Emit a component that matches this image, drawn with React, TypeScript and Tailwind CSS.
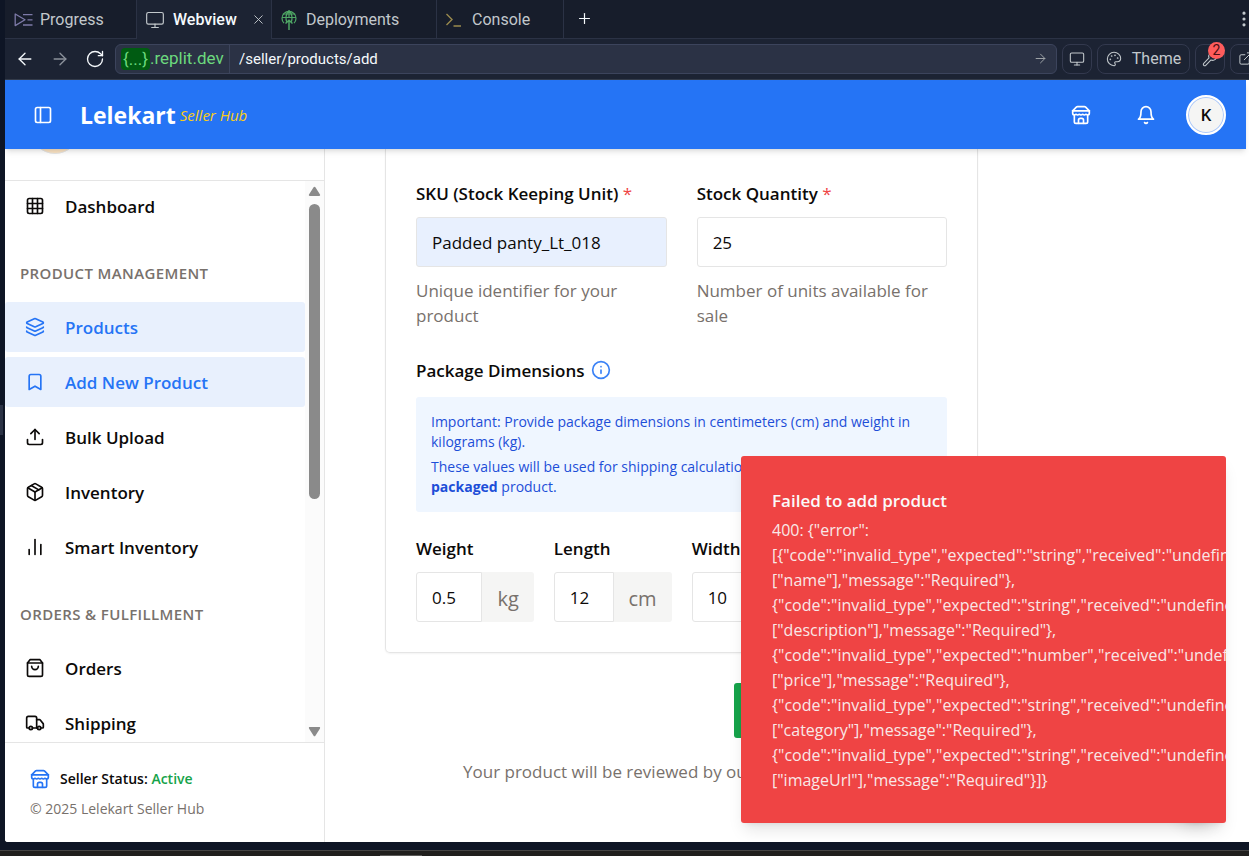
import type { ReactNode } from 'react';
import {
  ArrowLeft,
  ArrowRight,
  Bookmark,
  ChartNoAxesColumn,
  ExternalLink,
  Grid3x3,
  Info,
  Layers,
  Monitor,
  MoreVertical,
  Package,
  Palette,
  PanelLeft,
  Plus,
  RotateCw,
  Truck,
  Upload,
  Wrench,
  X,
} from 'lucide-react';

function Svg({ size = 20, className = '', children }: { size?: number; className?: string; children: ReactNode }) {
  return (
    <svg
      width={size}
      height={size}
      viewBox="0 0 24 24"
      fill="none"
      stroke="currentColor"
      strokeWidth={2}
      strokeLinecap="round"
      strokeLinejoin="round"
      className={className}
      aria-hidden="true"
    >
      {children}
    </svg>
  );
}

function StoreIcon({ className = '' }: { className?: string }) {
  return (
    <Svg className={className}>
      <path d="m2 7 4.41-4.41A2 2 0 0 1 7.83 2h8.34a2 2 0 0 1 1.42.59L22 7" />
      <path d="M4 12v8a2 2 0 0 0 2 2h12a2 2 0 0 0 2-2v-8" />
      <path d="M15 22v-4a2 2 0 0 0-2-2h-2a2 2 0 0 0-2 2v4" />
      <path d="M2 7h20" />
      <path d="M22 7v3a2 2 0 0 1-2 2a2.7 2.7 0 0 1-1.59-.63.7.7 0 0 0-.82 0A2.7 2.7 0 0 1 16 12a2.7 2.7 0 0 1-1.59-.63.7.7 0 0 0-.82 0A2.7 2.7 0 0 1 12 12a2.7 2.7 0 0 1-1.59-.63.7.7 0 0 0-.82 0A2.7 2.7 0 0 1 8 12a2.7 2.7 0 0 1-1.59-.63.7.7 0 0 0-.82 0A2.7 2.7 0 0 1 4 12a2 2 0 0 1-2-2V7" />
    </Svg>
  );
}

function BellIcon() {
  return (
    <Svg>
      <path d="M6 8a6 6 0 0 1 12 0c0 7 3 9 3 9H3s3-2 3-9" />
      <path d="M10.3 21a1.94 1.94 0 0 0 3.4 0" />
    </Svg>
  );
}

function BagIcon() {
  return (
    <Svg>
      <path d="M6 2 3 6v14a2 2 0 0 0 2 2h14a2 2 0 0 0 2-2V6l-3-4Z" />
      <path d="M3 6h18" />
      <path d="M16 10a4 4 0 0 1-8 0" />
    </Svg>
  );
}

function ProgressIcon() {
  return (
    <svg width="20" height="16" viewBox="0 0 20 16" fill="none" stroke="#7d7aa8" strokeWidth="1.3" aria-hidden="true">
      <path d="M1.2 2v11.6L11 7.8 1.2 2Z" strokeLinejoin="round" />
      <path d="M9 2.6h9.5M13.5 7.8h5M9 13h9.5" />
    </svg>
  );
}

function DeployIcon() {
  return (
    <svg width="18" height="22" viewBox="0 0 18 22" fill="none" stroke="#4fa765" strokeWidth="1.2" aria-hidden="true">
      <path d="M4 14.2A7 7 0 1 1 14 14.2" />
      <path d="M2 8.5h14M2.8 5h12.4M9 1.5C5.5 4.5 5.5 10.5 6.8 13M9 1.5c3.5 3 3.5 9 2.2 11.5M9 1.5v7" />
      <path d="M9 21v-9.5M5.5 14.5 9 11.2l3.5 3.3" strokeWidth="1.5" />
    </svg>
  );
}

function PromptIcon() {
  return (
    <svg width="17" height="16" viewBox="0 0 17 16" fill="none" stroke="#9a8a4e" strokeWidth="1.4" aria-hidden="true">
      <path d="m1.5 2 5.5 5.5L1.5 13M8.5 14H16" />
    </svg>
  );
}

function TabBar() {
  const tab = 'flex items-center border-r border-b border-[#2b3245] pt-0.5 text-base text-[#c2c8cc]';
  return (
    <nav className="flex h-[39px] bg-[#171d2b]" aria-label="Tool tabs">
      <button className={`${tab} w-[132px] gap-1.5 pl-[9px]`}>
        <ProgressIcon />
        Progress
      </button>
      <button className="flex w-[135px] items-center gap-2 border-r border-[#2b3245] bg-[#1c2333] pt-px pl-2 text-base font-medium text-[#f5f9fc]">
        <Monitor size={20} strokeWidth={1.4} className="text-[#c2c8cc]" />
        Webview
        <X size={15} strokeWidth={1.5} className="ml-1.5 text-[#c2c8cc]" />
      </button>
      <button className={`${tab} w-[165px] gap-2 pl-2`}>
        <DeployIcon />
        Deployments
      </button>
      <button className={`${tab} w-[127px] gap-2.5 pl-2`}>
        <PromptIcon />
        Console
      </button>
      <div className="flex grow items-center justify-between border-b border-[#2b3245] pl-3">
        <button aria-label="New tab">
          <Plus size={17} strokeWidth={1.7} className="text-[#f5f9fc]" />
        </button>
        <button aria-label="More options" className="-mr-[5px]">
          <MoreVertical size={20} strokeWidth={1.8} className="text-[#c2c8cc]" />
        </button>
      </div>
    </nav>
  );
}

function AddressBar() {
  const tool = 'flex h-[30px] shrink-0 items-center justify-center rounded-lg border border-[#33394e] text-[#c2c8cc]';
  return (
    <div className="flex h-[41px] shrink-0 items-center overflow-hidden border-b border-[#333b4a] bg-[#1c2333] pl-2.5">
      <div className="flex w-[100px] shrink-0 items-center gap-[15px] text-[#f5f9fc]">
        <button aria-label="Back">
          <ArrowLeft size={20} strokeWidth={1.6} />
        </button>
        <button aria-label="Forward" className="text-[#8b919b]">
          <ArrowRight size={20} strokeWidth={1.6} />
        </button>
        <button aria-label="Reload">
          <RotateCw size={20} strokeWidth={1.6} />
        </button>
      </div>
      <div className="flex h-[30px] grow items-center rounded-md border border-[#3c445c] bg-[#2b3245]">
        <div className="flex h-full w-[114px] items-center border-r border-[#3c445c] pl-[5px] text-[17px] text-[#6cd97e]">
          <span className="rounded bg-[#005b12] px-0.5 leading-[22px]">{'{...}'}</span>
          <span>.replit.dev</span>
        </div>
        <input
          aria-label="Path"
          defaultValue="/seller/products/add"
          className="h-full min-w-0 grow bg-transparent px-[9px] text-[15px] text-[#f5f9fc] outline-none"
        />
        <button aria-label="Go" className="mr-2 text-[#9da2a6]">
          <ArrowRight size={15} strokeWidth={1.6} />
        </button>
      </div>
      <div className="-mr-[11px] ml-[5px] flex shrink-0 gap-[5px]">
        <button className={`${tool} w-[30px]`} aria-label="Device size">
          <Monitor size={16} strokeWidth={1.6} />
        </button>
        <button className={`${tool} w-[93px] gap-2.5 text-base`}>
          <Palette size={16} strokeWidth={1.6} />
          Theme
        </button>
        <button className={`${tool} relative w-[30px]`} aria-label="Developer tools">
          <Wrench size={16} strokeWidth={1.6} />
          <span className="absolute -top-[3px] -right-px flex size-[17px] items-center justify-center rounded-full bg-[#ff5c5c] text-sm text-[#4a0f14]">
            2
          </span>
        </button>
        <button className={`${tool} w-[30px]`} aria-label="Open in new window">
          <ExternalLink size={15} strokeWidth={1.6} />
        </button>
      </div>
    </div>
  );
}

function SiteHeader() {
  return (
    <header className="z-10 flex h-[69px] shrink-0 items-center bg-[#2574f5] px-5 pt-0.5 text-white shadow-md">
      <button className="ml-2" aria-label="Toggle sidebar">
        <PanelLeft size={20} />
      </button>
      <a href="#home" className="ml-[27px] flex items-center gap-1">
        <span className="text-[23px] font-bold">Lelekart</span>
        <span className="text-[15px] text-[#facc15] italic">Seller Hub</span>
      </a>
      <div className="ml-auto flex items-center">
        <button aria-label="Store">
          <StoreIcon />
        </button>
        <button className="mx-[45px]" aria-label="Notifications">
          <BellIcon />
        </button>
        <button className="-ml-[15px] flex size-10 items-center justify-center rounded-full border-2 border-white bg-[#f5f5f4] text-[17px] font-semibold text-[#0c0a09] inset-ring inset-ring-[#a9c7fb]">
          K
        </button>
      </div>
    </header>
  );
}

function NavItem({ icon, label, active = false }: { icon: ReactNode; label: string; active?: boolean }) {
  return (
    <a
      href="#nav"
      className={`flex h-[50px] shrink-0 items-center gap-5 rounded-[3px] px-5 text-[17px] font-semibold ${
        active ? 'bg-[#e8f0fd] text-[#2574f5]' : 'text-[#0c0a09]'
      }`}
    >
      {icon}
      <span className="pt-[3px]">{label}</span>
    </a>
  );
}

function NavHeading({ children }: { children: ReactNode }) {
  return (
    <h2 className="-my-[5px] flex h-[71px] shrink-0 items-center px-[15px] pt-3.5 text-[15px] font-semibold tracking-wide text-[#78716c] uppercase">
      {children}
    </h2>
  );
}

function Sidebar() {
  return (
    <aside className="flex w-80 shrink-0 flex-col border-r border-[#e5e5e5] bg-white">
      <div className="h-8 shrink-0 overflow-hidden border-b border-[#e5e5e5] pl-[25px]">
        <div className="-mt-[45px] size-[50px] rounded-full border border-[#e5e5e5] bg-[#fbe3c3]" />
      </div>
      <div className="flex min-h-0 grow">
        <nav className="flex min-w-0 grow flex-col gap-[5px] overflow-hidden" aria-label="Seller menu">
          <NavItem icon={<Grid3x3 size={20} />} label="Dashboard" />
          <NavHeading>Product Management</NavHeading>
          <NavItem icon={<Layers size={20} />} label="Products" active />
          <NavItem icon={<Bookmark size={20} />} label="Add New Product" active />
          <NavItem icon={<Upload size={20} />} label="Bulk Upload" />
          <NavItem icon={<Package size={20} />} label="Inventory" />
          <NavItem icon={<ChartNoAxesColumn size={20} />} label="Smart Inventory" />
          <NavHeading>Orders &amp; Fulfillment</NavHeading>
          <NavItem icon={<BagIcon />} label="Orders" />
          <NavItem icon={<Truck size={20} />} label="Shipping" />
        </nav>
        <div className="flex w-[19px] shrink-0 flex-col items-center bg-[#fbfbfb] py-[5px]">
          <svg width="13" height="11" viewBox="0 0 13 11" fill="#8a8a8a" aria-hidden="true">
            <path d="M5.6 1.2 1 8.6C.6 9.4 1 10 1.8 10h9.4c.8 0 1.2-.6.8-1.4L7.4 1.2a1 1 0 0 0-1.8 0Z" />
          </svg>
          <div className="mt-[7px] h-[295px] w-[11px] rounded-full bg-[#8a8a8a]" />
          <svg width="13" height="11" viewBox="0 0 13 11" fill="#8a8a8a" className="mt-auto" aria-hidden="true">
            <path d="M5.6 9.8 1 2.4C.6 1.6 1 1 1.8 1h9.4c.8 0 1.2.6.8 1.4L7.4 9.8a1 1 0 0 1-1.8 0Z" />
          </svg>
        </div>
      </div>
      <div className="h-[100px] shrink-0 border-t border-[#e5e5e5] px-[25px] pt-[23px]">
        <p className="flex items-center gap-2.5 text-sm leading-[25px] font-semibold text-[#0c0a09]">
          <StoreIcon className="text-[#2574f5]" />
          <span>
            Seller Status: <span className="text-[#16a34a]">Active</span>
          </span>
        </p>
        <p className="mt-[5px] text-sm leading-[25px] text-[#78716c]">© 2025 Lelekart Seller Hub</p>
      </div>
    </aside>
  );
}

const labelStyle = 'block text-[17px] leading-[25px] font-semibold text-[#0c0a09]';

function Field({
  id,
  label,
  value,
  help,
  filled = false,
}: {
  id: string;
  label: string;
  value: string;
  help: string;
  filled?: boolean;
}) {
  return (
    <div className="min-w-0">
      <label htmlFor={id} className={labelStyle}>
        {label} <span className="font-normal text-[#ef4444]">*</span>
      </label>
      <input
        id={id}
        defaultValue={value}
        className={`mt-[11px] block h-[50px] w-full rounded-[3px] border border-[#e5e5e5] px-[15px] pt-0.5 text-[17px] text-[#0c0a09] outline-none ${
          filled ? 'bg-[#e8f0fe]' : 'bg-white'
        }`}
      />
      <p className="mt-[11px] text-[17px] leading-[25px] text-[#78716c]">{help}</p>
    </div>
  );
}

function Dimension({ id, label, value, unit }: { id: string; label: string; value: string; unit: string }) {
  return (
    <div className="min-w-0">
      <label htmlFor={id} className={labelStyle}>
        {label}
      </label>
      <div className="mt-[11px] flex h-[50px]">
        <input
          id={id}
          defaultValue={value}
          className="min-w-0 grow rounded-l-[3px] border border-[#e5e5e5] bg-white px-[15px] pt-0.5 text-[17px] text-[#0c0a09] outline-none"
        />
        <span className="flex items-center rounded-r-[3px] bg-[#f5f5f4] px-[15px] pt-1 text-xl text-[#78716c]">
          {unit}
        </span>
      </div>
    </div>
  );
}

function ProductForm() {
  return (
    <main className="grid min-w-0 grow grid-cols-[3fr_1fr] gap-2.5 overflow-hidden bg-white px-[60px]">
      <form className="min-w-0" onSubmit={(e) => e.preventDefault()}>
        <div className="rounded-b-[5px] border border-t-0 border-[#e5e5e5] px-[30px] pt-8 pb-[30px] shadow-xs">
          <div className="grid grid-cols-2 gap-[30px]">
            <Field
              id="sku"
              label="SKU (Stock Keeping Unit)"
              value="Padded panty_Lt_018"
              help="Unique identifier for your product"
              filled
            />
            <Field id="stock" label="Stock Quantity" value="25" help="Number of units available for sale" />
          </div>
          <div className="mt-[30px] flex items-center gap-[7px]">
            <h3 className={labelStyle}>Package Dimensions</h3>
            <Info size={20} className="text-[#3b82f6]" />
          </div>
          <div className="mt-3.5 rounded-[3px] bg-[#eff6ff] p-[15px] text-sm leading-5 text-[#1d4ed8]">
            <p>Important: Provide package dimensions in centimeters (cm) and weight in kilograms (kg).</p>
            <p className="mt-[5px]">
              These values will be used for shipping calculations. Enter the size of the <strong>packaged</strong>{' '}
              product.
            </p>
          </div>
          <div className="mt-6 grid grid-cols-4 gap-5">
            <Dimension id="weight" label="Weight" value="0.5" unit="kg" />
            <Dimension id="length" label="Length" value="12" unit="cm" />
            <Dimension id="width" label="Width" value="10" unit="cm" />
            <Dimension id="height" label="Height" value="5" unit="cm" />
          </div>
        </div>
        <div className="mt-[30px] flex justify-end">
          <button aria-label="Submit" className="h-[55px] w-[244px] rounded-[3px] bg-[#16a34a]" />
        </div>
        <p className="mt-[21px] pl-[78px] text-[17px] leading-[25px] text-[#78716c]">
          Your product will be reviewed by our
        </p>
      </form>
    </main>
  );
}

const issues = [
  ['string', 'name'],
  ['string', 'description'],
  ['number', 'price'],
  ['string', 'category'],
  ['string', 'imageUrl'],
];

function ErrorToast() {
  return (
    <div
      role="alert"
      className="absolute right-[23px] bottom-[19px] z-20 w-[485px] overflow-hidden rounded-[3px] bg-[#ef4444] pt-8 pb-[30px] pl-[31px] whitespace-nowrap text-[#fafaf9] shadow-lg"
    >
      <p className="text-[17px] leading-[25px] font-semibold">Failed to add product</p>
      <div className="mt-[5px] text-base leading-[25px] opacity-90">
        <p>{'400: {"error":'}</p>
        {issues.map(([expected, field], i) => (
          <div key={field}>
            <p>{`${i === 0 ? '[' : ''}{"code":"invalid_type","expected":"${expected}","received":"undefined","path":`}</p>
            <p>{`["${field}"],"message":"Required"}${i === issues.length - 1 ? ']}' : ','}`}</p>
          </div>
        ))}
      </div>
    </div>
  );
}

export default function App() {
  return (
    <div className="relative flex h-screen flex-col overflow-hidden bg-[#0e1525] font-['Roboto',sans-serif]">
      <div className="absolute top-[405px] left-0 h-[30px] w-[3px] bg-[#2b3245]" />
      <div className="flex min-h-0 grow flex-col pl-[5px]">
        <TabBar />
        <AddressBar />
        <div className="relative flex min-h-0 grow flex-col overflow-hidden rounded-bl-[3px] bg-white pr-[3px] font-['Open_Sans',sans-serif]">
          <SiteHeader />
          <div className="flex min-h-0 grow">
            <Sidebar />
            <ProductForm />
          </div>
          <div className="absolute right-[28px] bottom-5 size-[50px] rounded-full bg-[#2574f5] shadow-lg" />
          <ErrorToast />
        </div>
      </div>
      <div className="h-2 shrink-0" />
      <div className="flex h-1.5 shrink-0 items-end border-t border-[#454443] bg-[#201f1d] pl-[380px]">
        <div className="h-px w-[42px] bg-[#5a5957]" />
      </div>
    </div>
  );
}
